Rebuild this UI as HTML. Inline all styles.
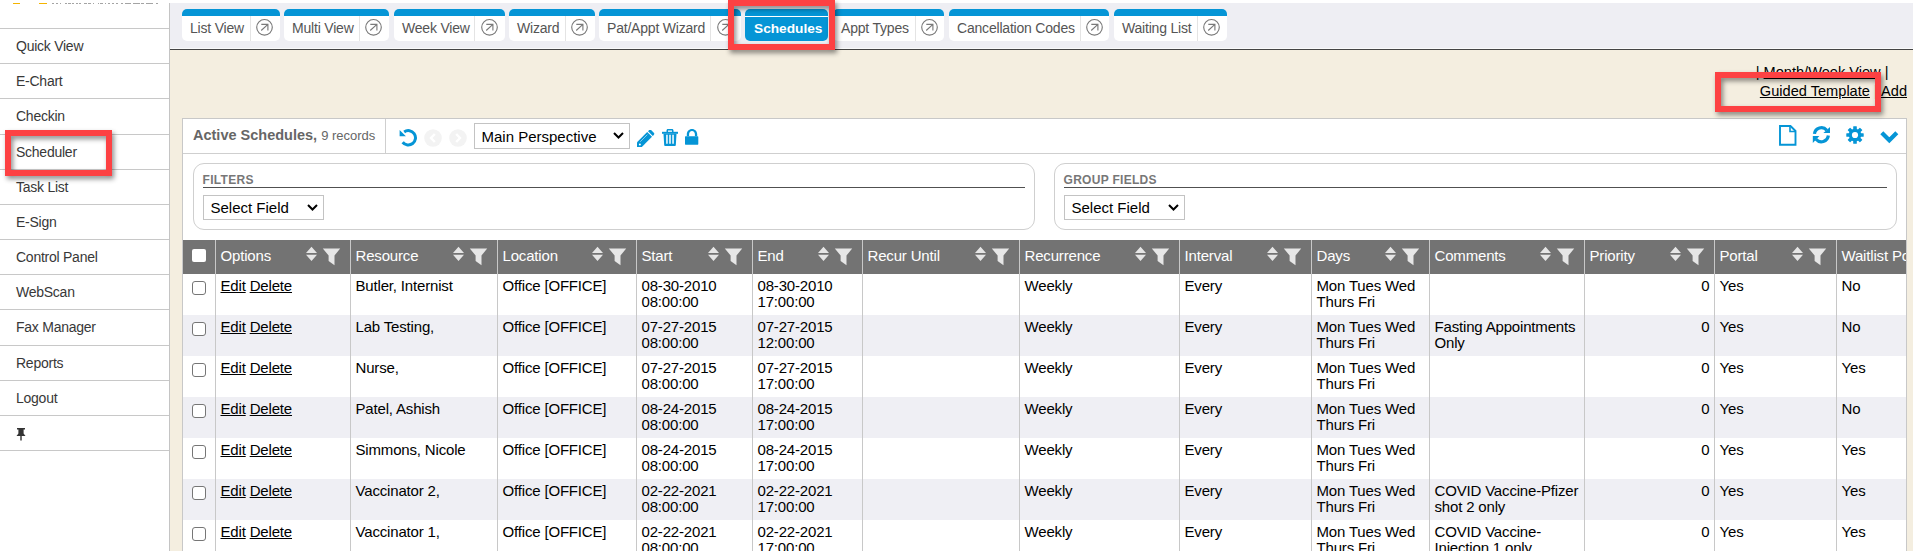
<!DOCTYPE html>
<html><head><meta charset="utf-8"><style>
*{box-sizing:border-box;margin:0;padding:0}
html,body{width:1913px;height:551px;overflow:hidden;background:#fff;font-family:"Liberation Sans",sans-serif;position:relative}
.abs{position:absolute}
#side{position:absolute;left:0;top:3px;width:170px;height:548px;border-right:1px solid #c4c4c4}
.si{position:absolute;left:0;width:169px;height:36px;border-top:1px solid #c8c8c8;font-size:14px;letter-spacing:-0.25px;color:#383838;padding-left:16px;line-height:34px}
#topbar{position:absolute;left:170px;top:3px;width:1743px;height:47px;background:#eeeef3;border-bottom:1px solid #444}
#topbar:after{content:"";position:absolute;left:0;right:0;bottom:0;height:1px;background:#fafafa}
.tab{position:absolute;top:9px;height:32px;background:#fff;border-radius:5px;overflow:hidden}
.tab .bar{position:absolute;left:0;right:0;top:0;height:7px;background:#0595d6}
.tab .tx{position:absolute;left:8px;top:11px;font-size:14px;letter-spacing:-0.2px;color:#555;line-height:16px;white-space:nowrap}
.tab .dv{position:absolute;top:7px;bottom:0;width:1px;background:#e4e4e4}
#beige{position:absolute;left:170px;top:50px;width:1743px;height:501px;background:#f4eee0}
#panel{position:absolute;left:182px;top:118px;width:1725px;height:440px;background:#fff;border:1px solid #c8c8c8;overflow:hidden}
#ph{position:absolute;left:0;top:0;width:100%;height:35px;border-bottom:1px solid #cfcfcf}
.box{position:absolute;top:44px;height:67px;border:1px solid #cfcfcf;border-radius:11px}
.box .lbl{position:absolute;left:9px;top:10px;right:9px;height:14px;border-bottom:1px solid #505050;font-size:12px;font-weight:bold;color:#777;line-height:12px;letter-spacing:0.3px}
.sel{position:absolute;height:25px;border:1px solid #c3c3c3;background:#fff;font-size:15px;color:#000;line-height:23px;padding-left:7px;white-space:nowrap}
table{position:absolute;left:-1.5px;top:121px;border-collapse:collapse;table-layout:fixed;font-size:15px;letter-spacing:-0.17px;color:#000;width:1774px}
th{background:#737373;color:#fff;font-weight:normal;height:34px;text-align:left;padding:0 0 4px 5px;border-left:1px solid #c8c8c8;position:relative;white-space:nowrap;overflow:hidden}
td{height:41px;vertical-align:top;padding:4px 0 0 5px;border-left:1px solid #c8c8c8;line-height:16px}
tr.alt td{background:#efeff4}
th svg.hi{position:absolute;right:8.5px;top:6px}
a{color:#000;text-decoration:underline}
.red{position:absolute;border:6px solid #fd4143;filter:drop-shadow(2px 3px 2.5px rgba(0,0,0,.45))}
.num{text-align:right;padding-right:4px}
</style></head><body>
<div class="abs" style="left:12.5px;top:3px;width:7px;height:1px;background:#f4b400"></div><div class="abs" style="left:39px;top:3px;width:8px;height:1px;background:#f4b400"></div><div class="abs" style="left:52px;top:3px;width:2.0px;height:1px;background:#a4a4a4"></div><div class="abs" style="left:56px;top:3px;width:2.3px;height:1px;background:#a4a4a4"></div><div class="abs" style="left:59.7px;top:3px;width:1.4px;height:1px;background:#a4a4a4"></div><div class="abs" style="left:64.9px;top:3px;width:1.9px;height:1px;background:#a4a4a4"></div><div class="abs" style="left:68.2px;top:3px;width:2.4px;height:1px;background:#a4a4a4"></div><div class="abs" style="left:72px;top:3px;width:1.8px;height:1px;background:#a4a4a4"></div><div class="abs" style="left:75.7px;top:3px;width:2.3px;height:1px;background:#a4a4a4"></div><div class="abs" style="left:79px;top:3px;width:1.9px;height:1px;background:#a4a4a4"></div><div class="abs" style="left:84px;top:3px;width:3.0px;height:1px;background:#a4a4a4"></div><div class="abs" style="left:88.4px;top:3px;width:2.6px;height:1px;background:#a4a4a4"></div><div class="abs" style="left:92.7px;top:3px;width:1.4px;height:1px;background:#a4a4a4"></div><div class="abs" style="left:97.9px;top:3px;width:0.9px;height:1px;background:#a4a4a4"></div><div class="abs" style="left:100.2px;top:3px;width:2.8px;height:1px;background:#a4a4a4"></div><div class="abs" style="left:104.5px;top:3px;width:1.8px;height:1px;background:#a4a4a4"></div><div class="abs" style="left:108px;top:3px;width:2.0px;height:1px;background:#a4a4a4"></div><div class="abs" style="left:112px;top:3px;width:1.9px;height:1px;background:#a4a4a4"></div><div class="abs" style="left:115.5px;top:3px;width:2.4px;height:1px;background:#a4a4a4"></div><div class="abs" style="left:120.9px;top:3px;width:2.1px;height:1px;background:#a4a4a4"></div><div class="abs" style="left:124.9px;top:3px;width:6.1px;height:1px;background:#a4a4a4"></div><div class="abs" style="left:132.7px;top:3px;width:7.3px;height:1px;background:#a4a4a4"></div><div class="abs" style="left:141.2px;top:3px;width:2.5px;height:1px;background:#a4a4a4"></div><div class="abs" style="left:145.6px;top:3px;width:7.3px;height:1px;background:#a4a4a4"></div><div class="abs" style="left:155.5px;top:3px;width:2.3px;height:1px;background:#a4a4a4"></div>
<div id="side">
 <div class="si" style="top:25px">Quick View</div>
 <div class="si" style="top:60.17px">E-Chart</div>
 <div class="si" style="top:95.34px">Checkin</div>
 <div class="si" style="top:130.51px">Scheduler</div>
 <div class="si" style="top:165.68px">Task List</div>
 <div class="si" style="top:200.85px">E-Sign</div>
 <div class="si" style="top:236.02px">Control Panel</div>
 <div class="si" style="top:271.19px">WebScan</div>
 <div class="si" style="top:306.36px">Fax Manager</div>
 <div class="si" style="top:341.53px">Reports</div>
 <div class="si" style="top:376.7px">Logout</div>
 <div class="si" style="top:411.87px"><svg width="12" height="14" viewBox="0 0 12 14" style="margin-left:-1px;vertical-align:middle"><path d="M2 1h8v1.5H8.6v4L10.5 9H6.7v4.5h-1.4V9H1.5l1.9-2.5v-4H2z" fill="#333"/></svg></div>
 <div class="si" style="top:447.04px;height:100px"></div>
</div>
<div id="topbar"></div>
<div id="beige"></div>
<div class="tab" style="left:182px;width:98px"><div class="bar"></div><div class="tx">List View</div><div class="dv" style="left:68px"></div><span class="abs" style="left:73.2px;top:9px;line-height:0"><svg width="19" height="19" viewBox="0 0 19 19"><circle cx="9.5" cy="9.3" r="7.8" fill="none" stroke="#7a7a7a" stroke-width="1.15"/><path d="M6.2 12.5L12.9 6.3M6.3 6.3H12.9V12.5" fill="none" stroke="#7a7a7a" stroke-width="1.15"/></svg></span></div><div class="tab" style="left:284px;width:105px"><div class="bar"></div><div class="tx">Multi View</div><div class="dv" style="left:75px"></div><span class="abs" style="left:80.3px;top:9px;line-height:0"><svg width="19" height="19" viewBox="0 0 19 19"><circle cx="9.5" cy="9.3" r="7.8" fill="none" stroke="#7a7a7a" stroke-width="1.15"/><path d="M6.2 12.5L12.9 6.3M6.3 6.3H12.9V12.5" fill="none" stroke="#7a7a7a" stroke-width="1.15"/></svg></span></div><div class="tab" style="left:394px;width:111px"><div class="bar"></div><div class="tx">Week View</div><div class="dv" style="left:80px"></div><span class="abs" style="left:85.8px;top:9px;line-height:0"><svg width="19" height="19" viewBox="0 0 19 19"><circle cx="9.5" cy="9.3" r="7.8" fill="none" stroke="#7a7a7a" stroke-width="1.15"/><path d="M6.2 12.5L12.9 6.3M6.3 6.3H12.9V12.5" fill="none" stroke="#7a7a7a" stroke-width="1.15"/></svg></span></div><div class="tab" style="left:509px;width:86px"><div class="bar"></div><div class="tx">Wizard</div><div class="dv" style="left:56px"></div><span class="abs" style="left:61.3px;top:9px;line-height:0"><svg width="19" height="19" viewBox="0 0 19 19"><circle cx="9.5" cy="9.3" r="7.8" fill="none" stroke="#7a7a7a" stroke-width="1.15"/><path d="M6.2 12.5L12.9 6.3M6.3 6.3H12.9V12.5" fill="none" stroke="#7a7a7a" stroke-width="1.15"/></svg></span></div><div class="tab" style="left:599px;width:142px"><div class="bar"></div><div class="tx">Pat/Appt Wizard</div><div class="dv" style="left:111px"></div><span class="abs" style="left:116.8px;top:9px;line-height:0"><svg width="19" height="19" viewBox="0 0 19 19"><circle cx="9.5" cy="9.3" r="7.8" fill="none" stroke="#7a7a7a" stroke-width="1.15"/><path d="M6.2 12.5L12.9 6.3M6.3 6.3H12.9V12.5" fill="none" stroke="#7a7a7a" stroke-width="1.15"/></svg></span></div><div class="tab" style="left:833px;width:111px"><div class="bar"></div><div class="tx">Appt Types</div><div class="dv" style="left:82px"></div><span class="abs" style="left:86.5px;top:9px;line-height:0"><svg width="19" height="19" viewBox="0 0 19 19"><circle cx="9.5" cy="9.3" r="7.8" fill="none" stroke="#7a7a7a" stroke-width="1.15"/><path d="M6.2 12.5L12.9 6.3M6.3 6.3H12.9V12.5" fill="none" stroke="#7a7a7a" stroke-width="1.15"/></svg></span></div><div class="tab" style="left:949px;width:160px"><div class="bar"></div><div class="tx">Cancellation Codes</div><div class="dv" style="left:131px"></div><span class="abs" style="left:135.5px;top:9px;line-height:0"><svg width="19" height="19" viewBox="0 0 19 19"><circle cx="9.5" cy="9.3" r="7.8" fill="none" stroke="#7a7a7a" stroke-width="1.15"/><path d="M6.2 12.5L12.9 6.3M6.3 6.3H12.9V12.5" fill="none" stroke="#7a7a7a" stroke-width="1.15"/></svg></span></div><div class="tab" style="left:1114px;width:113px"><div class="bar"></div><div class="tx">Waiting List</div><div class="dv" style="left:83px"></div><span class="abs" style="left:88.2px;top:9px;line-height:0"><svg width="19" height="19" viewBox="0 0 19 19"><circle cx="9.5" cy="9.3" r="7.8" fill="none" stroke="#7a7a7a" stroke-width="1.15"/><path d="M6.2 12.5L12.9 6.3M6.3 6.3H12.9V12.5" fill="none" stroke="#7a7a7a" stroke-width="1.15"/></svg></span></div><div class="tab" style="left:745px;width:83px;background:#0595d6"><div class="abs" style="left:0;right:0;top:7px;height:1px;background:#fff"></div><div class="tx" style="left:9px;top:11.5px;color:#fff;font-weight:bold;font-size:13.7px;letter-spacing:0">Schedules</div></div>
<div class="abs" style="left:1700px;top:62.7px;font-size:14.6px;color:#000;line-height:19px;text-align:right;width:188.5px;white-space:nowrap">| <a>Month/Week View</a> |</div><div class="abs" style="left:1700px;top:81.7px;font-size:14.6px;color:#000;line-height:19px;text-align:right;width:207px;white-space:nowrap"><a>Guided Template</a> | <a>Add</a></div>
<div id="panel">
 <div id="ph">
  <div class="abs" style="left:10px;top:8px;font-size:14.5px;font-weight:bold;color:#666;white-space:nowrap">Active Schedules, <span style="font-weight:normal;font-size:13px">9 records</span></div>
  <div class="abs" style="left:202px;top:0;width:1px;height:35px;background:#cfcfcf"></div>
  <svg class="abs" style="left:216px;top:10px" width="19" height="19" viewBox="0 0 19 19"><path d="M3.65 13.26A7.2 7.2 0 1 0 5.17 2.9" fill="none" stroke="#0595d6" stroke-width="3"/><path d="M0.6 0.9V7.2H6.9z" fill="#0595d6"/></svg><svg class="abs" style="left:241px;top:10px" width="19" height="19" viewBox="0 0 19 19"><circle cx="9" cy="9" r="8.8" fill="#f3f3f3"/><path d="M10.8 5L7 9l3.8 4" fill="none" stroke="#fff" stroke-width="2.4"/></svg><svg class="abs" style="left:265.5px;top:10px" width="19" height="19" viewBox="0 0 19 19"><circle cx="9" cy="9" r="8.8" fill="#f3f3f3"/><path d="M7.2 5L11 9l-3.8 4" fill="none" stroke="#fff" stroke-width="2.4"/></svg>
  <div class="sel" style="left:291px;top:4px;width:156px;height:26px;line-height:25px;padding-left:6.5px">Main Perspective<svg class="abs" style="right:5px;top:8px" width="11" height="7" viewBox="0 0 11 7"><path d="M1 1l4.5 4.5L10 1" fill="none" stroke="#000" stroke-width="2"/></svg></div>
  <svg class="abs" style="left:454px;top:10.5px" width="18" height="18" viewBox="0 0 18 18"><path d="M0 12.2L10.2 2 15 6.8 4.8 17H0z" fill="#0595d6"/><path d="M11 1.2l1-1c.7-.7 1.6-.7 2.3 0l2.5 2.5c.7.7.7 1.6 0 2.3l-1 1z" fill="#0595d6"/><path d="M3.2 11.8L10.4 4.6" stroke="#bfe3f5" stroke-width=".7"/><circle cx="2.9" cy="14.6" r="1" fill="#fff"/></svg><svg class="abs" style="left:479px;top:10px" width="16" height="17" viewBox="0 0 16 17"><path d="M4.5 3V1.6C4.5.7 5.1 0 6 0h4c.9 0 1.5.7 1.5 1.6V3H10V1.5H6V3z" fill="#0595d6"/><path d="M0 2.8H16V4.8H0z" fill="#0595d6"/><path d="M1.5 4.8H14.5L13.8 16.2C13.7 16.7 13.4 17 12.9 17H3.1C2.6 17 2.3 16.7 2.2 16.2z" fill="#0595d6"/><path d="M4.2 5.8h1.5v8.9H4.2zM7.25 5.8h1.5v8.9h-1.5zM10.3 5.8h1.5v8.9h-1.5z" fill="#fff"/></svg><svg class="abs" style="left:502px;top:10px" width="14" height="16" viewBox="0 0 14 16"><path d="M1.8 7.3V5.2C1.8 2.3 4 0 7 0s5.2 2.3 5.2 5.2v2.1H9.9V5.2C9.9 3.4 8.7 2 7 2S4.1 3.4 4.1 5.2v2.1z" fill="#0595d6"/><rect x="0" y="7.3" width="13.3" height="8.4" rx="0.6" fill="#0595d6"/></svg><svg class="abs" style="left:1596px;top:6px" width="18" height="21" viewBox="0 0 18 21"><path d="M1 1H11.5L16.5 6V19.8H1z" fill="none" stroke="#0595d6" stroke-width="1.9"/><path d="M11 1V6.5H16.5" fill="none" stroke="#0595d6" stroke-width="1.6"/></svg><svg class="abs" style="left:1629px;top:6px" width="19" height="19" viewBox="0 0 19 19"><path d="M2.45 8.85A7 7 0 0 1 14.76 5.2" fill="none" stroke="#0595d6" stroke-width="3.2"/><path d="M18 2V7.9H11.4z" fill="#0595d6"/><path d="M16.35 10.55A7 7 0 0 1 4.04 14.2" fill="none" stroke="#0595d6" stroke-width="3.2"/><path d="M0.8 11.1H7.4L0.8 17.9z" fill="#0595d6"/></svg><svg class="abs" style="left:1663.2px;top:6.7px" width="18" height="18" viewBox="0 0 18 18"><g fill="#0595d6"><circle cx="9" cy="9" r="6.3"/><rect x="7.2" y="0.3" width="3.6" height="5" rx="0.5" transform="rotate(0 9 9)"/><rect x="7.2" y="0.3" width="3.6" height="5" rx="0.5" transform="rotate(45 9 9)"/><rect x="7.2" y="0.3" width="3.6" height="5" rx="0.5" transform="rotate(90 9 9)"/><rect x="7.2" y="0.3" width="3.6" height="5" rx="0.5" transform="rotate(135 9 9)"/><rect x="7.2" y="0.3" width="3.6" height="5" rx="0.5" transform="rotate(180 9 9)"/><rect x="7.2" y="0.3" width="3.6" height="5" rx="0.5" transform="rotate(225 9 9)"/><rect x="7.2" y="0.3" width="3.6" height="5" rx="0.5" transform="rotate(270 9 9)"/><rect x="7.2" y="0.3" width="3.6" height="5" rx="0.5" transform="rotate(315 9 9)"/></g><circle cx="9" cy="9" r="3.1" fill="#fff"/></svg><svg class="abs" style="left:1696.5px;top:12px" width="19" height="13" viewBox="0 0 19 13"><path d="M1.8 1.8L9.3 9.3 16.8 1.8" fill="none" stroke="#0595d6" stroke-width="4.2"/></svg>
 </div>
 <div class="box" style="left:9.5px;width:842px"><div class="lbl">FILTERS</div>
  <div class="sel" style="left:9px;top:31px;width:121.5px">Select Field<svg class="abs" style="right:5px;top:8px" width="11" height="7" viewBox="0 0 11 7"><path d="M1 1l4.5 4.5L10 1" fill="none" stroke="#000" stroke-width="2"/></svg></div></div>
 <div class="box" style="left:870.5px;width:843px"><div class="lbl">GROUP FIELDS</div>
  <div class="sel" style="left:9px;top:31px;width:121.5px">Select Field<svg class="abs" style="right:5px;top:8px" width="11" height="7" viewBox="0 0 11 7"><path d="M1 1l4.5 4.5L10 1" fill="none" stroke="#000" stroke-width="2"/></svg></div></div>
 <table><colgroup><col style="width:33px"><col style="width:135px"><col style="width:147px"><col style="width:139px"><col style="width:116px"><col style="width:110px"><col style="width:157px"><col style="width:160px"><col style="width:132px"><col style="width:118px"><col style="width:155px"><col style="width:130px"><col style="width:122px"><col style="width:120px"></colgroup>
  <thead><tr><th><div style="width:14px;height:13px;background:#fff;border-radius:2px;margin-left:4.5px"></div></th><th>Options<svg class="hi" width="35" height="20" viewBox="0 0 35 20"><path d="M5.5 0.8L11 7H0z M0 8.8H11L5.5 15z" fill="#e6e6e6"/><path d="M16.8 2.6H34.2L28.5 9.4V19.2L22.6 15V9.4z" fill="#e6e6e6"/></svg></th><th>Resource<svg class="hi" width="35" height="20" viewBox="0 0 35 20"><path d="M5.5 0.8L11 7H0z M0 8.8H11L5.5 15z" fill="#e6e6e6"/><path d="M16.8 2.6H34.2L28.5 9.4V19.2L22.6 15V9.4z" fill="#e6e6e6"/></svg></th><th>Location<svg class="hi" width="35" height="20" viewBox="0 0 35 20"><path d="M5.5 0.8L11 7H0z M0 8.8H11L5.5 15z" fill="#e6e6e6"/><path d="M16.8 2.6H34.2L28.5 9.4V19.2L22.6 15V9.4z" fill="#e6e6e6"/></svg></th><th>Start<svg class="hi" width="35" height="20" viewBox="0 0 35 20"><path d="M5.5 0.8L11 7H0z M0 8.8H11L5.5 15z" fill="#e6e6e6"/><path d="M16.8 2.6H34.2L28.5 9.4V19.2L22.6 15V9.4z" fill="#e6e6e6"/></svg></th><th>End<svg class="hi" width="35" height="20" viewBox="0 0 35 20"><path d="M5.5 0.8L11 7H0z M0 8.8H11L5.5 15z" fill="#e6e6e6"/><path d="M16.8 2.6H34.2L28.5 9.4V19.2L22.6 15V9.4z" fill="#e6e6e6"/></svg></th><th>Recur Until<svg class="hi" width="35" height="20" viewBox="0 0 35 20"><path d="M5.5 0.8L11 7H0z M0 8.8H11L5.5 15z" fill="#e6e6e6"/><path d="M16.8 2.6H34.2L28.5 9.4V19.2L22.6 15V9.4z" fill="#e6e6e6"/></svg></th><th>Recurrence<svg class="hi" width="35" height="20" viewBox="0 0 35 20"><path d="M5.5 0.8L11 7H0z M0 8.8H11L5.5 15z" fill="#e6e6e6"/><path d="M16.8 2.6H34.2L28.5 9.4V19.2L22.6 15V9.4z" fill="#e6e6e6"/></svg></th><th>Interval<svg class="hi" width="35" height="20" viewBox="0 0 35 20"><path d="M5.5 0.8L11 7H0z M0 8.8H11L5.5 15z" fill="#e6e6e6"/><path d="M16.8 2.6H34.2L28.5 9.4V19.2L22.6 15V9.4z" fill="#e6e6e6"/></svg></th><th>Days<svg class="hi" width="35" height="20" viewBox="0 0 35 20"><path d="M5.5 0.8L11 7H0z M0 8.8H11L5.5 15z" fill="#e6e6e6"/><path d="M16.8 2.6H34.2L28.5 9.4V19.2L22.6 15V9.4z" fill="#e6e6e6"/></svg></th><th>Comments<svg class="hi" width="35" height="20" viewBox="0 0 35 20"><path d="M5.5 0.8L11 7H0z M0 8.8H11L5.5 15z" fill="#e6e6e6"/><path d="M16.8 2.6H34.2L28.5 9.4V19.2L22.6 15V9.4z" fill="#e6e6e6"/></svg></th><th>Priority<svg class="hi" width="35" height="20" viewBox="0 0 35 20"><path d="M5.5 0.8L11 7H0z M0 8.8H11L5.5 15z" fill="#e6e6e6"/><path d="M16.8 2.6H34.2L28.5 9.4V19.2L22.6 15V9.4z" fill="#e6e6e6"/></svg></th><th>Portal<svg class="hi" width="35" height="20" viewBox="0 0 35 20"><path d="M5.5 0.8L11 7H0z M0 8.8H11L5.5 15z" fill="#e6e6e6"/><path d="M16.8 2.6H34.2L28.5 9.4V19.2L22.6 15V9.4z" fill="#e6e6e6"/></svg></th><th>Waitlist Position</th></tr></thead>
  <tbody><tr><td><div style="width:14px;height:14px;border:1px solid #767676;border-radius:3px;background:#fff;margin:3px 0 0 4px"></div></td><td><a>Edit</a> <a>Delete</a></td><td>Butler, Internist</td><td>Office [OFFICE]</td><td>08-30-2010<br>08:00:00</td><td>08-30-2010<br>17:00:00</td><td></td><td>Weekly</td><td>Every</td><td>Mon Tues Wed Thurs Fri</td><td></td><td class="num">0</td><td>Yes</td><td>No</td></tr><tr class="alt"><td><div style="width:14px;height:14px;border:1px solid #767676;border-radius:3px;background:#fff;margin:3px 0 0 4px"></div></td><td><a>Edit</a> <a>Delete</a></td><td>Lab Testing,</td><td>Office [OFFICE]</td><td>07-27-2015<br>08:00:00</td><td>07-27-2015<br>12:00:00</td><td></td><td>Weekly</td><td>Every</td><td>Mon Tues Wed Thurs Fri</td><td>Fasting Appointments Only</td><td class="num">0</td><td>Yes</td><td>No</td></tr><tr><td><div style="width:14px;height:14px;border:1px solid #767676;border-radius:3px;background:#fff;margin:3px 0 0 4px"></div></td><td><a>Edit</a> <a>Delete</a></td><td>Nurse,</td><td>Office [OFFICE]</td><td>07-27-2015<br>08:00:00</td><td>07-27-2015<br>17:00:00</td><td></td><td>Weekly</td><td>Every</td><td>Mon Tues Wed Thurs Fri</td><td></td><td class="num">0</td><td>Yes</td><td>Yes</td></tr><tr class="alt"><td><div style="width:14px;height:14px;border:1px solid #767676;border-radius:3px;background:#fff;margin:3px 0 0 4px"></div></td><td><a>Edit</a> <a>Delete</a></td><td>Patel, Ashish</td><td>Office [OFFICE]</td><td>08-24-2015<br>08:00:00</td><td>08-24-2015<br>17:00:00</td><td></td><td>Weekly</td><td>Every</td><td>Mon Tues Wed Thurs Fri</td><td></td><td class="num">0</td><td>Yes</td><td>No</td></tr><tr><td><div style="width:14px;height:14px;border:1px solid #767676;border-radius:3px;background:#fff;margin:3px 0 0 4px"></div></td><td><a>Edit</a> <a>Delete</a></td><td>Simmons, Nicole</td><td>Office [OFFICE]</td><td>08-24-2015<br>08:00:00</td><td>08-24-2015<br>17:00:00</td><td></td><td>Weekly</td><td>Every</td><td>Mon Tues Wed Thurs Fri</td><td></td><td class="num">0</td><td>Yes</td><td>Yes</td></tr><tr class="alt"><td><div style="width:14px;height:14px;border:1px solid #767676;border-radius:3px;background:#fff;margin:3px 0 0 4px"></div></td><td><a>Edit</a> <a>Delete</a></td><td>Vaccinator 2,</td><td>Office [OFFICE]</td><td>02-22-2021<br>08:00:00</td><td>02-22-2021<br>17:00:00</td><td></td><td>Weekly</td><td>Every</td><td>Mon Tues Wed Thurs Fri</td><td>COVID Vaccine-Pfizer shot 2 only</td><td class="num">0</td><td>Yes</td><td>Yes</td></tr><tr><td><div style="width:14px;height:14px;border:1px solid #767676;border-radius:3px;background:#fff;margin:3px 0 0 4px"></div></td><td><a>Edit</a> <a>Delete</a></td><td>Vaccinator 1,</td><td>Office [OFFICE]</td><td>02-22-2021<br>08:00:00</td><td>02-22-2021<br>17:00:00</td><td></td><td>Weekly</td><td>Every</td><td>Mon Tues Wed Thurs Fri</td><td>COVID Vaccine-Injection 1 only</td><td class="num">0</td><td>Yes</td><td>Yes</td></tr></tbody>
 </table>
</div>
<div class="red" style="left:5px;top:130px;width:107px;height:46px"></div>
<div class="red" style="left:728px;top:0px;width:107px;height:50px"></div>
<div class="red" style="left:1715px;top:72px;width:166px;height:40px"></div>
</body></html>
